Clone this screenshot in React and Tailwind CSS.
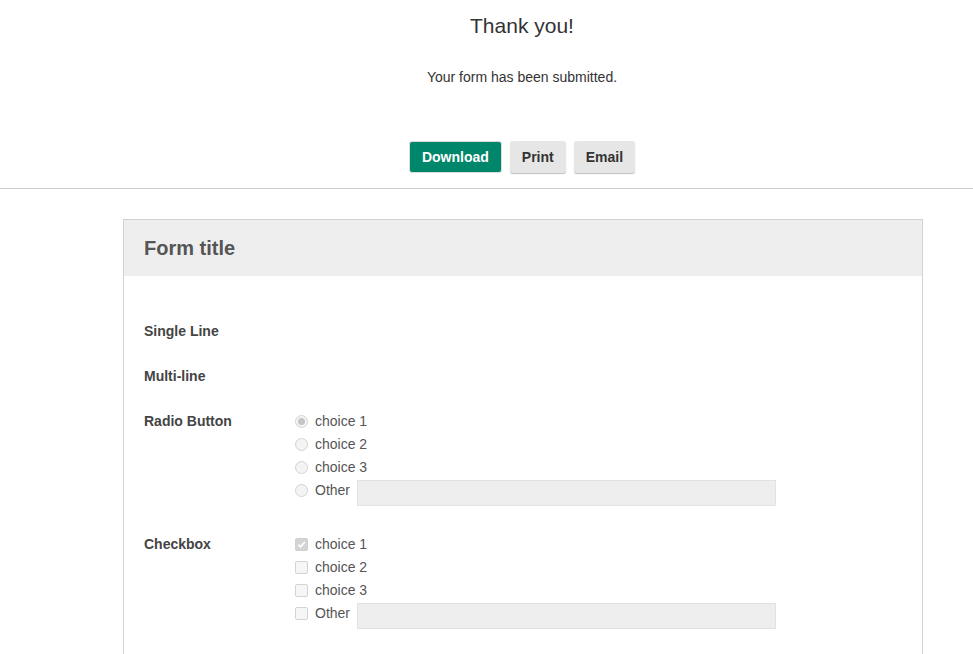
import React from 'react';

const font = { fontFamily: '"Liberation Sans", Arial, sans-serif' };

const Radio = ({ checked }) => (
  <span className="w-[13px] h-[13px] rounded-full border border-[#d3d3d3] bg-[#f4f4f4] flex items-center justify-center shrink-0">
    {checked && <span className="w-[7px] h-[7px] rounded-full bg-[#c4c4c4]" />}
  </span>
);

const Check = ({ checked }) => (
  <span
    className={`w-[13px] h-[13px] rounded-[2px] border flex items-center justify-center shrink-0 ${
      checked ? 'bg-[#d4d4d4] border-[#cfcfcf]' : 'bg-[#f6f6f6] border-[#d3d3d3]'
    }`}
  >
    {checked && (
      <svg width="9" height="9" viewBox="0 0 10 10">
        <path d="M1.5 5.2 L4 7.6 L8.6 2.4" fill="none" stroke="#fff" strokeWidth="1.8" />
      </svg>
    )}
  </span>
);

const ChoiceGroup = ({ type }) => {
  const Mark = type === 'radio' ? Radio : Check;
  return (
    <div className="flex flex-col">
      {['choice 1', 'choice 2', 'choice 3'].map((c, i) => (
        <div key={c} className="h-[23px] flex items-center gap-[7px]">
          <Mark checked={i === 0} />
          <span className="text-[14px] text-[#555]">{c}</span>
        </div>
      ))}
      <div className="h-[23px] flex items-center">
        <Mark />
        <span className="text-[14px] text-[#555] ml-[7px]">Other</span>
        <div className="ml-[7px] mt-[5px] w-[419px] h-[26px] bg-[#eeeeee] border border-[#e2e2e2]" />
      </div>
    </div>
  );
};

const FieldLabel = ({ children }) => (
  <div className="w-[151px] shrink-0 text-[14px] font-bold text-[#444] leading-[23px]">{children}</div>
);

export default function App() {
  return (
    <div className="w-[973px] h-[654px] overflow-hidden bg-white" style={font}>
      {/* confirmation */}
      <div className="pl-[71px] flex flex-col items-center">
        <h1 className="mt-[14px] text-[21px] leading-[24px] text-[#333]">Thank you!</h1>
        <p className="mt-[31px] text-[14px] leading-[16px] text-[#333]">Your form has been submitted.</p>
        <div className="mt-[56px] flex gap-[8px]">
          <button className="h-[32px] px-[12px] rounded-[3px] bg-[#00866a] border border-[#dcdcdc] text-white text-[14px] font-bold">
            Download
          </button>
          <button className="h-[32px] px-[12px] rounded-[3px] bg-[#e6e6e6] shadow-[0_1px_1px_rgba(0,0,0,0.25)] text-[#333] text-[14px] font-bold">
            Print
          </button>
          <button className="h-[32px] px-[12px] rounded-[3px] bg-[#e6e6e6] shadow-[0_1px_1px_rgba(0,0,0,0.25)] text-[#333] text-[14px] font-bold">
            Email
          </button>
        </div>
      </div>
      <div className="mt-[15px] border-t border-[#cccccc]" />

      {/* form card */}
      <div className="ml-[123px] mt-[30px] w-[800px] h-[500px] border border-[#d2d2d2]">
        <div className="h-[56px] bg-[#eeeeee] px-[20px] flex items-center">
          <h2 className="text-[20px] font-bold text-[#555]">Form title</h2>
        </div>
        <div className="px-[20px] pt-[44px]">
          <div className="flex">
            <FieldLabel>Single Line</FieldLabel>
          </div>
          <div className="flex mt-[22px]">
            <FieldLabel>Multi-line</FieldLabel>
          </div>
          <div className="flex mt-[22px]">
            <FieldLabel>Radio Button</FieldLabel>
            <ChoiceGroup type="radio" />
          </div>
          <div className="flex mt-[31px]">
            <FieldLabel>Checkbox</FieldLabel>
            <ChoiceGroup type="checkbox" />
          </div>
        </div>
      </div>
    </div>
  );
}
